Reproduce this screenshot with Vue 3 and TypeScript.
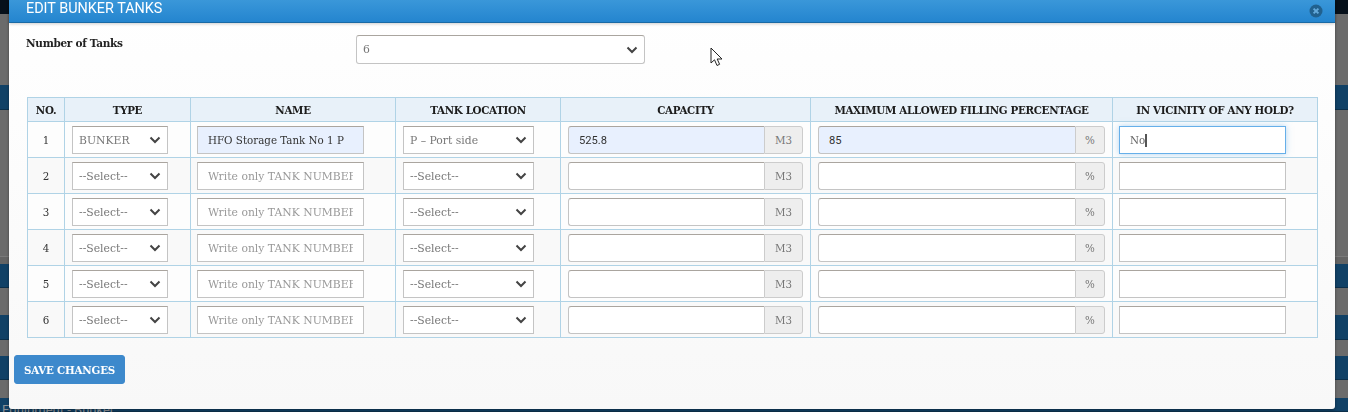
<script setup lang="ts">
interface TankRow {
  no: number
  type: string
  name: string
  location: string
  capacity: string
  filling: string
  vicinity: string
}

const rows: TankRow[] = [
  { no: 1, type: 'BUNKER', name: 'HFO Storage Tank No 1 P', location: 'P – Port side', capacity: '525.8', filling: '85', vicinity: 'No' },
  { no: 2, type: '--Select--', name: '', location: '--Select--', capacity: '', filling: '', vicinity: '' },
  { no: 3, type: '--Select--', name: '', location: '--Select--', capacity: '', filling: '', vicinity: '' },
  { no: 4, type: '--Select--', name: '', location: '--Select--', capacity: '', filling: '', vicinity: '' },
  { no: 5, type: '--Select--', name: '', location: '--Select--', capacity: '', filling: '', vicinity: '' },
  { no: 6, type: '--Select--', name: '', location: '--Select--', capacity: '', filling: '', vicinity: '' },
]

const backdrop = [
  { h: 14, kind: 'band-dark' },
  { h: 71, kind: 'band-grey' },
  { h: 25, kind: 'band-blue' },
  { h: 146, kind: 'band-grey' },
  { h: 8, kind: 'band-line' },
  { h: 24, kind: 'band-blue' },
  { h: 27, kind: 'band-grey' },
  { h: 25, kind: 'band-blue' },
  { h: 16, kind: 'band-grey' },
  { h: 24, kind: 'band-blue' },
  { h: 18, kind: 'band-grey' },
  { h: 14, kind: 'band-blue' },
]
</script>

<template>
  <div class="page">
    <div class="backdrop">
      <div
        v-for="(band, i) in backdrop"
        :key="i"
        :class="band.kind"
        :style="{ height: band.h + 'px' }"
      />
      <span class="behind">Equipment - Bunker</span>
    </div>

    <section class="modal">
      <header class="modal-head">
        <h4>EDIT BUNKER TANKS</h4>
        <svg class="close" width="14" height="14" viewBox="0 0 14 14">
          <circle cx="7" cy="7" r="6.5" fill="#21618f" />
          <path d="M4.6 4.6l4.8 4.8M9.4 4.6l-4.8 4.8" stroke="#63a9db" stroke-width="2" />
        </svg>
      </header>

      <div class="modal-body">
        <div class="count-row">
          <label>Number of Tanks</label>
          <div class="select count-select">
            <span>6</span>
            <svg class="chev" width="12" height="8" viewBox="0 0 12 8"><path d="M1.5 1.5L6 6l4.5-4.5" /></svg>
          </div>
        </div>

        <table>
          <thead>
            <tr>
              <th class="c-no">NO.</th>
              <th class="c-type">TYPE</th>
              <th class="c-name">NAME</th>
              <th class="c-loc">TANK LOCATION</th>
              <th class="c-cap">CAPACITY</th>
              <th class="c-fill">MAXIMUM ALLOWED FILLING PERCENTAGE</th>
              <th class="c-vic">IN VICINITY OF ANY HOLD?</th>
            </tr>
          </thead>
          <tbody>
            <tr v-for="row in rows" :key="row.no">
              <td class="num">{{ row.no }}</td>
              <td>
                <div class="select square type-select">
                  <span>{{ row.type }}</span>
                  <svg class="chev" width="12" height="8" viewBox="0 0 12 8"><path d="M1.5 1.5L6 6l4.5-4.5" /></svg>
                </div>
              </td>
              <td>
                <div class="field name-field" :class="{ filled: row.name }">
                  <span v-if="row.name">{{ row.name }}</span>
                  <span v-else class="placeholder">Write only TANK NUMBER</span>
                </div>
              </td>
              <td>
                <div class="select square loc-select">
                  <span>{{ row.location }}</span>
                  <svg class="chev" width="12" height="8" viewBox="0 0 12 8"><path d="M1.5 1.5L6 6l4.5-4.5" /></svg>
                </div>
              </td>
              <td>
                <div class="group group-cap">
                  <div class="field numeric" :class="{ filled: row.capacity }">{{ row.capacity }}</div>
                  <div class="addon addon-cap">M3</div>
                </div>
              </td>
              <td>
                <div class="group group-fill">
                  <div class="field numeric" :class="{ filled: row.filling }">{{ row.filling }}</div>
                  <div class="addon addon-pct">%</div>
                </div>
              </td>
              <td>
                <div class="field vic-field" :class="{ focused: row.vicinity }">
                  <template v-if="row.vicinity">
                    <span class="typed">{{ row.vicinity }}</span><i class="caret" />
                  </template>
                </div>
              </td>
            </tr>
          </tbody>
        </table>

        <button class="save" type="button">SAVE CHANGES</button>
      </div>
    </section>

    <svg class="pointer" width="14" height="20" viewBox="0 0 14 20">
      <path d="M1 1v15l3.5-3.2L7 18.5l2.6-1.2L7.2 12H12z" fill="#fff" stroke="#222" stroke-width="1" />
    </svg>
  </div>
</template>

<style>
html,
body {
  margin: 0;
  overflow: hidden;
}
</style>

<style scoped>
.page {
  position: relative;
  width: 1348px;
  height: 412px;
  overflow: hidden;
  font-family: "DejaVu Serif", "Liberation Serif", serif;
  font-size: 10.3px;
  color: #333;
  background: #666;
}

.backdrop {
  position: absolute;
  inset: 0;
}

.band-dark {
  background: #06101a;
}

.band-grey {
  background: #6b6b6b;
}

.band-line {
  background: #646464;
  border-top: 1px solid #7a7a7a;
  box-sizing: border-box;
}

.band-blue {
  background: #114166;
  border-bottom: 1px solid #0c2f4a;
  box-sizing: border-box;
}

.behind {
  position: absolute;
  left: 2px;
  top: 402px;
  font-family: Roboto, "Liberation Sans", sans-serif;
  font-size: 13px;
  color: #8a8f94;
}

.modal {
  position: absolute;
  left: 9px;
  top: 0;
  width: 1326px;
  height: 409px;
  background: linear-gradient(#fff, #f8f8f8);
  border-radius: 0 0 3px 3px;
  box-shadow: 0 1px 3px rgba(0, 0, 0, 0.4);
  transform: translateZ(0);
}

.modal-head {
  display: flex;
  align-items: center;
  justify-content: space-between;
  height: 22px;
  padding: 0 12px 0 17px;
  background: linear-gradient(#3a97d9, #2485cf);
  border-bottom: 1px solid #1a6aa5;
  box-shadow: 0 1px 3px rgba(0, 0, 0, 0.2);
}

.modal-head h4 {
  align-self: flex-start;
  margin: 0;
  font-family: Roboto, "Liberation Sans", sans-serif;
  font-size: 14.4px;
  font-weight: 400;
  line-height: 18px;
  color: #fff;
}

.modal-body {
  padding: 12px 17px 0 5px;
}

.count-row {
  display: flex;
  align-items: flex-start;
  height: 62px;
  padding-left: 12px;
}

.count-row label {
  width: 330px;
  margin-top: 2px;
  font-size: 10.5px;
  font-weight: 700;
  letter-spacing: -0.3px;
  color: #222;
}

.select {
  display: flex;
  align-items: center;
  justify-content: space-between;
  box-sizing: border-box;
  height: 29px;
  padding: 0 6px;
  background: #fff;
  border: 1px solid #c4c4c4;
  border-top-color: #aaa59f;
  border-radius: 3px;
  font-size: 10.8px;
  color: #777;
}

.count-select {
  width: 289px;
}

.select.square {
  height: 28px;
  border-radius: 0;
}

.chev {
  flex: none;
}

.chev path {
  fill: none;
  stroke: #444;
  stroke-width: 2;
}

table {
  width: 1291px;
  margin-left: 13px;
  border-collapse: collapse;
  table-layout: fixed;
}

th,
td {
  border: 1px solid #b0d3e6;
  padding: 0;
}

th {
  height: 23px;
  background: #e8f1f9;
  font-size: 10.3px;
  font-weight: 700;
  letter-spacing: -0.33px;
  color: #1c1c1c;
  text-align: center;
}

td {
  padding: 4px 6px 3px 7px;
  background: #fdfdfd;
}

tbody tr:nth-child(even) td {
  background: #f9f9f9;
}

td.num {
  padding: 0;
  text-align: center;
  color: #333;
}

.c-no { width: 36px; }
.c-type { width: 125px; }
.c-name { width: 204px; }
.c-loc { width: 164px; }
.c-cap { width: 249px; }
.c-fill { width: 301px; }

.type-select { width: 96px; }
.loc-select { width: 131px; }

.field {
  box-sizing: border-box;
  display: flex;
  align-items: center;
  height: 28px;
  padding: 0 10px;
  overflow: hidden;
  background: #fff;
  border: 1px solid #c4c4c4;
  border-top-color: #aaa59f;
  white-space: nowrap;
  color: #333;
}

.filled {
  background: #e8f0fe;
}

.numeric {
  font-family: Roboto, "Liberation Sans", sans-serif;
  font-size: 11.2px;
}

.name-field,
.vic-field {
  width: 167px;
  margin-left: -1px;
}

.placeholder {
  overflow: hidden;
  font-size: 10.8px;
  color: #999;
}

.focused {
  border-color: #66afe9;
  box-shadow: 0 0 6px rgba(102, 175, 233, 0.5);
}

.typed {
  color: #666;
}

.caret {
  width: 2px;
  height: 13px;
  background: #555;
}

.group {
  display: flex;
}

.group-cap { width: 235px; }
.group-fill { width: 287px; }

.group .field {
  flex: 1;
  border-right: 0;
  border-radius: 3px 0 0 3px;
}

.addon {
  flex: none;
  box-sizing: border-box;
  display: flex;
  align-items: center;
  justify-content: center;
  height: 28px;
  background: #eee;
  border: 1px solid #ccc;
  border-radius: 0 3px 3px 0;
  color: #777;
}

.addon-cap { width: 39px; }
.addon-pct { width: 30px; }

.save {
  display: block;
  height: 29px;
  width: 111px;
  margin-top: 17px;
  padding: 0;
  background: #3d89cc;
  border: 1px solid #3d89cc;
  border-radius: 3px;
  font-family: inherit;
  font-size: 10.3px;
  font-weight: 700;
  letter-spacing: -0.2px;
  color: #fff;
}

.pointer {
  position: absolute;
  left: 710px;
  top: 47px;
}
</style>
